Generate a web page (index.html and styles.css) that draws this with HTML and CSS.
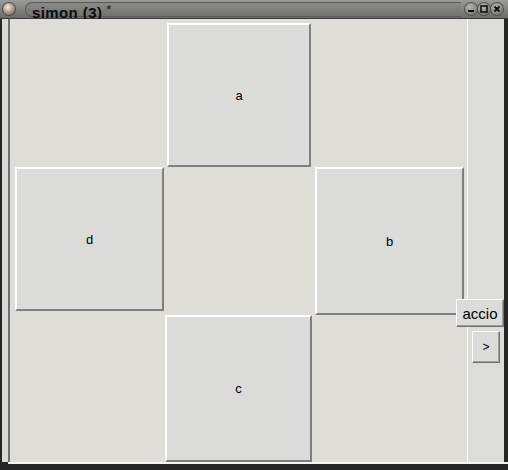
FILE: index.html
```html
<!DOCTYPE html>
<html lang="en">
<head>
  <meta charset="UTF-8" />
  <title>simon (3) *</title>
  <link rel="stylesheet" href="styles.css">
</head>
<body>
  <div class="window">
    <div class="titlebar">
      <span class="orb"></span>
      <div class="title-pill">
        <span class="title">simon (3)</span><span class="star">*</span>
      </div>
      <div class="controls">
        <span class="ctl">
          <svg width="12" height="12" viewBox="0 0 12 12"><rect x="3" y="7" width="6" height="2" fill="#111"/></svg>
        </span>
        <span class="ctl">
          <svg width="12" height="12" viewBox="0 0 12 12"><rect x="3" y="3" width="6" height="6" fill="none" stroke="#111" stroke-width="1.6"/></svg>
        </span>
        <span class="ctl">
          <svg width="12" height="12" viewBox="0 0 12 12"><path d="M3.5 3.5 L8.5 8.5 M8.5 3.5 L3.5 8.5" stroke="#111" stroke-width="2"/></svg>
        </span>
      </div>
    </div>

    <div class="frame">
      <div class="edge-left"></div>
      <div class="canvas">
        <button class="pad" style="left:157px;top:4px;width:144px;height:144px">a</button>
        <button class="pad" style="left:5px;top:148px;width:149px;height:144px">d</button>
        <button class="pad" style="left:305px;top:148px;width:149px;height:148px">b</button>
        <button class="pad" style="left:155px;top:296px;width:147px;height:147px">c</button>
      </div>
      <div class="side">
        <button class="btn accio">accio</button>
        <button class="btn next">&gt;</button>
      </div>
      <div class="edge-right"></div>
    </div>
    <div class="edge-bottom"></div>
  </div>
</body>
</html>
```

FILE: styles.css
```css
body {
  margin: 0;
  background: #2a2a2a;
  font-family: "Liberation Sans", Arial, sans-serif;
}

.window {
  width: 508px;
  height: 470px;
  display: flex;
  flex-direction: column;
  background: #262626;
  overflow: hidden;
}

/* title bar */
.titlebar {
  height: 18px;
  flex-shrink: 0;
  display: flex;
  align-items: center;
  background: linear-gradient(#9a9a98, #6c6c6a);
  border-bottom: 1px solid #3c3c3c;
  padding: 0 5px 0 3px;
}

.orb {
  width: 12px;
  height: 12px;
  border-radius: 50%;
  background: radial-gradient(circle at 40% 35%, #f4efe6 0, #b9a995 40%, #5d5346 100%);
  box-shadow: 0 0 0 1px #4a4a48;
  flex-shrink: 0;
}

.title-pill {
  flex: 1;
  height: 13px;
  margin: 0 4px 0 10px;
  border-radius: 7px 0 0 7px;
  background: linear-gradient(#8a8a88, #727270);
  border: 1px solid #5a5a58;
  border-right: none;
  display: flex;
  align-items: flex-end;
  padding-left: 6px;
}

.title {
  font-weight: bold;
  font-size: 15px;
  letter-spacing: 0.4px;
  color: #0c0c0c;
  line-height: 14px;
  margin-bottom: -4px;
}

.star {
  font-size: 13px;
  color: #1a1a1a;
  align-self: flex-start;
  margin-left: 4px;
  line-height: 13px;
}

.controls {
  display: flex;
  gap: 1px;
}

.ctl {
  width: 12px;
  height: 12px;
  border-radius: 50%;
  background: radial-gradient(circle at 40% 35%, #b5b5b2 0, #8a8a88 55%, #5c5c5a 100%);
  box-shadow: 0 0 0 1px #4e4e4c;
  display: flex;
}

/* frame */
.frame {
  flex: 1;
  display: flex;
  min-height: 0;
}

.edge-left {
  width: 6px;
  margin-left: 2px;
  background: #d9d9d5;
  border-right: 2px solid #6e6e6c;
}

.canvas {
  flex: 1;
  position: relative;
  background: #dfddd8;
}

.pad {
  position: absolute;
  box-sizing: border-box;
  margin: 0;
  padding: 0;
  background: #dbdcd9;
  border: 2px solid;
  border-color: #ffffff #7f7f7d #7f7f7d #ffffff;
  font-family: "Liberation Sans", Arial, sans-serif;
  font-size: 13px;
  color: #000;
}

.side {
  width: 36px;
  border-left: 1px solid #ffffff;
  background: #dcdcd9;
  display: flex;
  flex-direction: column;
  align-items: center;
  padding-top: 280px;
  position: relative;
  z-index: 1;
}

.btn {
  box-sizing: border-box;
  margin: 0;
  padding: 0;
  background: #dbdcd9;
  border: 1px solid;
  border-color: #ffffff #6f6f6d #6f6f6d #ffffff;
  box-shadow: inset -1px -1px 0 #a0a09e;
  font-family: "Liberation Sans", Arial, sans-serif;
  color: #000;
  flex-shrink: 0;
}

.accio {
  align-self: flex-end;
  width: 48px;
  height: 28px;
  font-size: 15px;
}

.next {
  width: 28px;
  height: 32px;
  margin-top: 4px;
  font-size: 12px;
}

.edge-right {
  width: 4px;
  background: #262626;
}

.edge-bottom {
  height: 6px;
  flex-shrink: 0;
  margin-left: 8px;
  border-top: 2px solid #f4f4f2;
  background: #262626;
}
```
